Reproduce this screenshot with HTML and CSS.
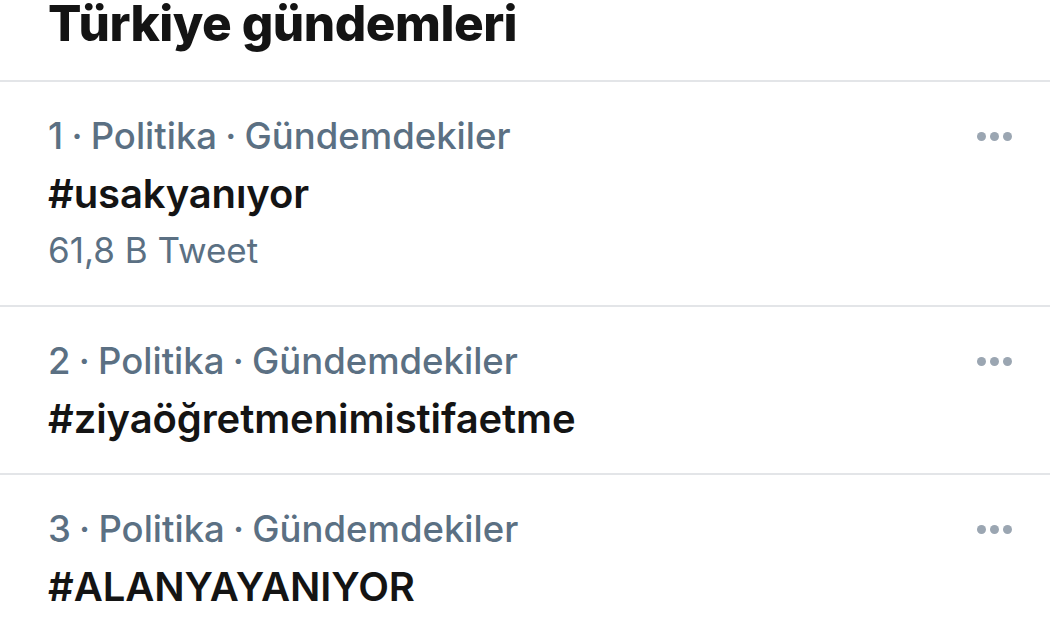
FILE: index.html
```html
<!DOCTYPE html>
<html lang="tr">
<head>
    <meta charset="UTF-8">
    <meta name="viewport" content="width=device-width, initial-scale=1.0">
    <title>Türkiye gündemleri</title>
    <link rel="stylesheet" href="styles.css">
</head>
<body>
    <header class="page-head">
        <h1>Türkiye gündemleri</h1>
    </header>

    <section class="trends">
        <div class="trend">
            <div class="trend-text">
                <div class="meta">1 · Politika · Gündemdekiler</div>
                <div class="tag">#usakyanıyor</div>
                <div class="count">61,8 B Tweet</div>
            </div>
            <button class="more" aria-label="Diğer"><span></span><span></span><span></span></button>
        </div>

        <div class="trend">
            <div class="trend-text">
                <div class="meta">2 · Politika · Gündemdekiler</div>
                <div class="tag">#ziyaöğretmenimistifaetme</div>
            </div>
            <button class="more" aria-label="Diğer"><span></span><span></span><span></span></button>
        </div>

        <div class="trend">
            <div class="trend-text">
                <div class="meta">3 · Politika · Gündemdekiler</div>
                <div class="tag">#ALANYAYANIYOR</div>
            </div>
            <button class="more" aria-label="Diğer"><span></span><span></span><span></span></button>
        </div>
    </section>
</body>
</html>
```

FILE: styles.css
```css
body {
    margin: 0;
    font-family: 'Inter', 'Noto Sans', sans-serif;
    background: #fff;
    color: #14171a;
    overflow: hidden;
}

.page-head {
    height: 80px;
    border-bottom: 2px solid #e3e5e8;
    overflow: hidden;
}

.page-head h1 {
    margin: -7px 0 0 48px;
    font-size: 49.5px;
    font-weight: 800;
    line-height: 60px;
    letter-spacing: -0.5px;
    color: #141414;
}

.trend {
    display: flex;
    justify-content: space-between;
    align-items: flex-start;
    padding: 26px 38px 26px 48px;
    border-bottom: 2px solid #e3e5e8;
}

.meta,
.count {
    font-size: 36.5px;
    line-height: 57px;
    font-weight: 500;
    color: #5b7083;
}

.meta {
    word-spacing: -1.5px;
}

.count {
    font-size: 35px;
    font-weight: 400;
}

.tag {
    font-size: 40px;
    line-height: 57px;
    font-weight: 600;
    letter-spacing: -0.1px;
    color: #141414;
}

.more {
    display: flex;
    gap: 4px;
    margin-top: 24px;
    padding: 0;
    border: none;
    background: none;
}

.more span {
    width: 9px;
    height: 9px;
    border-radius: 50%;
    background: #9ba6b2;
}
```
